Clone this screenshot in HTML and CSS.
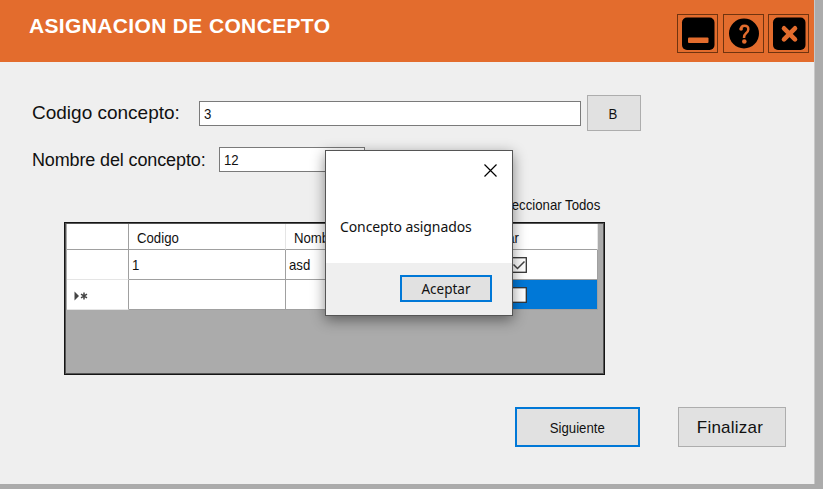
FILE: index.html
```html
<!DOCTYPE html>
<html lang="es">
<head>
<meta charset="utf-8">
<title>Asignacion de concepto</title>
<link rel="stylesheet" href="styles.css">
</head>
<body>
<main class="window">
  <header class="titlebar">
    <h1 class="title">ASIGNACION DE CONCEPTO</h1>
    <div class="controls">
      <button class="control" aria-label="Minimizar"><svg width="41" height="39" viewBox="0 0 41 39"><rect x="5" y="3.500" width="32.500" height="32.500" rx="5" fill="#000"/><rect x="11" y="23.500" width="20.500" height="5.500" rx="1" fill="#e36c2d"/></svg></button>
      <button class="control" aria-label="Ayuda"><svg width="41" height="39" viewBox="0 0 41 39"><circle cx="21" cy="19.500" r="15" fill="#000"/><path d="M17.800 15.500Q18 11.700 21.400 11.700Q25.500 11.700 25.300 15.500Q25.200 17.600 23 19.200Q21 20.800 21 24" fill="none" stroke="#e36c2d" stroke-width="2.500"/><circle cx="18.100" cy="15" r="1.800" fill="#e36c2d"/><circle cx="21.300" cy="27.500" r="2.300" fill="#e36c2d"/></svg></button>
      <button class="control" aria-label="Cerrar"><svg width="41" height="39" viewBox="0 0 41 39"><rect x="5" y="3.500" width="32.500" height="32.500" rx="5" fill="#000"/><path d="M16 14.300L27 25.300M27 14.300L16 25.300" stroke="#e36c2d" stroke-width="4.600" stroke-linecap="round"/></svg></button>
    </div>
  </header>
  <section class="content">
    <div class="field code">
      <label class="label"><span>Codigo concepto:</span></label>
      <div class="input"><span class="narrow">3</span></div>
      <button class="button search"><span class="narrow">B</span></button>
    </div>
    <div class="field name">
      <label class="label"><span>Nombre del concepto:</span></label>
      <div class="input"><span class="narrow">12</span></div>
    </div>
    <div class="select-all"><span class="narrow">Seleccionar Todos</span></div>
    <div class="grid">
      <div class="row head"><div class="cell"></div><div class="cell"><span class="narrow">Codigo</span></div><div class="cell"><span class="narrow">Nombre</span></div><div class="cell"><span class="narrow">Seleccionar</span></div></div>
      <div class="row"><div class="cell"></div><div class="cell"><span class="narrow">1</span></div><div class="cell"><span class="narrow">asd</span></div><div class="cell check"><svg width="16" height="16" viewBox="0 0 16 16"><rect x=".7" y=".7" width="14.600" height="14.600" fill="#fff" stroke="#333" stroke-width="1.300"/><path d="M2.500 7.500L6.500 11.500L13.500 4.500" fill="none" stroke="#444" stroke-width="1.500"/></svg></div></div>
      <div class="row new"><div class="cell marker"><svg width="14" height="10" viewBox="0 0 14 10"><path d="M.5 .5L5 5L.5 9.500Z" fill="#444"/><path d="M10 1.500V8.500M7 3.200L13 6.800M13 3.200L7 6.800" stroke="#444" stroke-width="1.500"/></svg></div><div class="cell"></div><div class="cell"></div><div class="cell check selected"><svg width="16" height="16" viewBox="0 0 16 16"><rect x=".7" y=".7" width="14.600" height="14.600" fill="#fff" stroke="#333" stroke-width="1.300"/></svg></div></div>
    </div>
    <footer class="actions">
      <button class="button next"><span class="narrow">Siguiente</span></button>
      <button class="button finish"><span>Finalizar</span></button>
    </footer>
  </section>
</main>
<div class="dialog" role="dialog">
  <div class="dialog-top"><svg width="13" height="13" viewBox="0 0 13 13"><path d="M.5 .5L12.500 12.500M12.500 .5L.5 12.500" stroke="#000" stroke-width="1.200"/></svg></div>
  <p class="message">Concepto asignados</p>
  <div class="dialog-footer"><button class="accept">Aceptar</button></div>
</div>
</body>
</html>
```
FILE: styles.css
```css
* { box-sizing: border-box; }
body { margin: 0; width: 823px; height: 489px; overflow: hidden; background: #ababab; color: #111; font: 14px/18px "Liberation Sans", Arial, sans-serif; }
button { padding: 0; font: inherit; color: inherit; }
.window { width: 815px; height: 484px; background: #efefef; border-right: 1px solid #c8c8c8; }
.titlebar { height: 62px; display: flex; justify-content: space-between; background: #e36c2d; }
.title { margin: 14px 0 0 29px; color: #fff; font-size: 21px; line-height: 24px; font-weight: 700; letter-spacing: .35px; white-space: nowrap; }
.controls { display: flex; gap: 4.500px; padding: 14px 5px 0 0; }
.control { width: 41px; height: 39px; background: none; border: 1px solid #70340f; }
.control svg { display: block; margin: -1px; }
.content { display: flex; flex-direction: column; height: 422px; }
.field { display: flex; white-space: nowrap; }
.code { height: 36px; margin: 33px 0 0 32px; align-items: center; }
.name { height: 25px; margin: 16px 0 0 32px; align-items: center; }
.code .label { width: 167px; margin-top: -1px; font-size: 19px; }
.name .label { width: 187px; margin-top: 1px; font-size: 18px; letter-spacing: -.13px; }
.input { height: 25px; padding: 3px 4px; background: #fff; border: 1px solid #7a7a7a; }
.code .input { width: 382px; }
.name .input { width: 146px; }
.button { display: flex; align-items: center; justify-content: center; background: #e1e1e1; border: 1px solid #adadad; }
.search { width: 54px; height: 36px; margin-left: 6px; }
.search .narrow { transform-origin: center; margin: 1px 2px 0 0; }
.narrow { display: inline-block; font-size: 15px; transform: scaleX(.88); transform-origin: left; white-space: nowrap; }
.select-all { width: 600px; margin-top: 24px; text-align: right; }
.select-all .narrow { transform-origin: right; }
.grid { width: 541px; height: 153px; margin: 8px 0 0 64px; padding: 1px 0 0 2px; background: #ababab; border: 1px solid #151515; box-shadow: inset 0 0 0 1px #555; }
.row { display: grid; grid-template-columns: 62px 157px 156px 156px; height: 30px; }
.head { height: 26px; }
.cell { display: flex; align-items: center; padding-left: 3px; background: #fff; border-right: 1px solid #a0a0a0; border-bottom: 1px solid #a0a0a0; }
.cell:first-child { border-bottom-color: #e5e5e5; }
.head .cell { padding: 2px 0 0 8px; border-right-color: #e5e5e5; }
.head .cell:first-child { border-color: #a0a0a0; }
.row .check { justify-content: center; padding: 0 2px 0 0; }
.cell.selected { background: #0078d7; }
.cell.marker { padding: 3px 0 0 7px; }
.actions { display: flex; gap: 38px; margin: 32px 0 0 515px; }
.next { width: 125px; height: 40px; border: 2px solid #0078d7; }
.next .narrow { transform-origin: center; margin-top: 1px; }
.finish { width: 108px; height: 40px; font-size: 17px; letter-spacing: .25px; }
.finish span { margin: 1px 4px 0 0; }
.dialog { position: absolute; left: 325px; top: 150px; width: 188px; height: 166px; display: flex; flex-direction: column; background: #fff; border: 1px solid #555; box-shadow: 0 4px 13px rgba(0,0,0,.45); font-family: "Noto Sans", sans-serif; }
.dialog-top { display: flex; justify-content: flex-end; padding: 13px 15px 0 0; height: 66px; }
.message { margin: 0 0 0 14px; height: 46px; font-size: 14px; line-height: 20px; letter-spacing: -.1px; white-space: nowrap; }
.dialog-footer { flex: 1; padding: 12px 20px 0; display: flex; justify-content: flex-end; align-items: flex-start; background: #efefef; }
.accept { width: 92px; height: 27px; background: #e1e1e1; border: 2px solid #0078d7; font-size: 13.500px; letter-spacing: 0; }
```
